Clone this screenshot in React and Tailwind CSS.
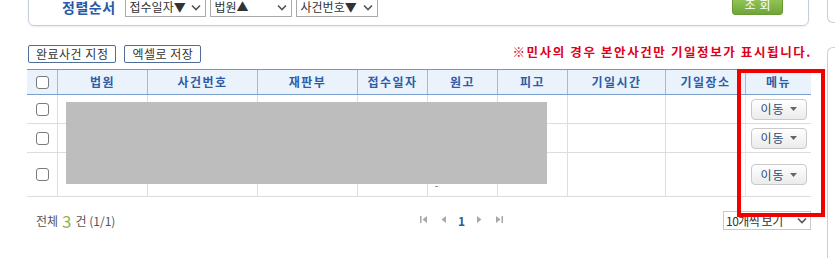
import React from 'react';

const columns = [
  { label: '법원', w: 'w-[90px]' },
  { label: '사건번호', w: 'w-[110px]' },
  { label: '재판부', w: 'w-[100px]' },
  { label: '접수일자', w: 'w-[70px]' },
  { label: '원고', w: 'w-[70px]' },
  { label: '피고', w: 'w-[70px]' },
  { label: '기일시간', w: 'w-[98px]' },
  { label: '기일장소', w: 'w-[80px]' },
];

const rows = [{ h: 'h-[29px]' }, { h: 'h-[29px]' }, { h: 'h-[44px]' }];

const CheckBox = () => (
  <span className="block w-[13px] h-[13px] border border-[#7a7a7a] rounded-[3px] bg-white" />
);

const Chevron = () => (
  <svg width="10" height="7" viewBox="0 0 10 7" className="shrink-0">
    <path d="M1 1.5 L5 5.5 L9 1.5" fill="none" stroke="#555" strokeWidth="1.6" />
  </svg>
);

const SortSelect = ({ text, w }) => (
  <div className={`${w} h-[20px] border border-[#a9a9a9] bg-white flex items-center justify-between pl-[4px] pr-[4px] text-[12px] text-[#333]`}>
    <span className="whitespace-pre">{text}</span>
    <Chevron />
  </div>
);

const MoveButton = () => (
  <div className="w-[56px] h-[21px] rounded-[4px] border border-[#c9c9c9] bg-gradient-to-b from-white to-[#ebebeb] flex items-center justify-center gap-[5px] text-[12px] text-[#2d4a75] tracking-[1px]">
    <span>이동</span>
    <svg width="7" height="4" viewBox="0 0 7 4">
      <path d="M0 0 H7 L3.5 4 Z" fill="#666" />
    </svg>
  </div>
);

const PageIcon = ({ d }) => (
  <svg width="8" height="9" viewBox="0 0 8 9">
    <path d={d} fill="#a8a8a8" />
  </svg>
);

export default function App() {
  return (
    <div
      className="w-[835px] h-[258px] bg-white relative overflow-hidden flex"
      style={{ fontFamily: '"Noto Sans CJK KR", "Noto Sans", sans-serif' }}
    >
      {/* main content */}
      <div className="w-[827px] shrink-0 pl-[27px]">
        {/* search panel (cut at top) */}
        <div className="ml-[1px] w-[781px] mt-[-20px] h-[46px] border border-[#c3cfdc] rounded-b-[6px] shadow-[0_1px_2px_rgba(0,0,0,0.08)] pt-[16px] pl-[33px] pr-[25px]">
          <div className="h-[20px] flex items-center">
            <span className="text-[14px] font-bold text-[#2a58a8] mr-[9px] leading-none tracking-[0.5px]">정렬순서</span>
            <SortSelect text="접수일자▼" w="w-[81px]" />
            <div className="w-[4px]" />
            <SortSelect text="법원▲" w="w-[82px]" />
            <div className="w-[4px]" />
            <SortSelect text="사건번호▼" w="w-[82px]" />
            <div className="ml-auto self-start mt-[-2px] w-[51px] h-[20px] rounded-[3px] border border-[#6a9a34] bg-gradient-to-b from-[#9ccc5c] to-[#6ea53a] text-white text-[12px] flex items-center justify-center tracking-[4px] pl-[4px]">
              조회
            </div>
          </div>
        </div>

        {/* buttons + notice */}
        <div className="mt-[19px] ml-[1px] w-[783px] h-[18px] flex items-center">
          <div className="h-[18px] px-[7px] border border-[#4d6f97] rounded-[2px] text-[12px] text-[#333] flex items-center tracking-[0.5px]">
            완료사건 지정
          </div>
          <div className="ml-[8px] h-[18px] px-[7px] border border-[#4d6f97] rounded-[2px] text-[12px] text-[#333] flex items-center tracking-[0.5px]">
            엑셀로 저장
          </div>
          <div className="ml-auto mt-[-4px] text-[12.5px] font-bold text-[#e0001a] tracking-[1.6px] mr-[-1px]">
            ※민사의 경우 본안사건만 기일정보가 표시됩니다.
          </div>
        </div>

        {/* table */}
        <div className="mt-[6px] w-[784px]">
          <div className="h-[26px] flex border-t border-t-[#6f96c8] border-b border-b-[#7a9fcf] bg-[#eaf2fc]">
            <div className="w-[30px] flex items-center justify-center">
              <CheckBox />
            </div>
            {columns.map((c) => (
              <div
                key={c.label}
                className={`${c.w} border-l border-[#9fbadf] flex items-center justify-center text-[12px] font-bold text-[#2d5ca6] tracking-[1.5px]`}
              >
                {c.label}
              </div>
            ))}
            <div className="w-[66px] border-l border-[#9fbadf] flex items-center justify-center text-[12px] font-bold text-[#2d5ca6] tracking-[1.5px]">
              메뉴
            </div>
          </div>
          {rows.map((r, i) => (
            <div key={i} className={`${r.h} flex border-b border-[#dcdcdc]`}>
              <div className="w-[30px] flex items-center justify-center">
                <CheckBox />
              </div>
              {columns.map((c, j) => (
                <div key={c.label} className={`${c.w} border-l border-[#dedede] flex items-end justify-center`}>
                  {i === 2 && j === 4 && <span className="text-[10px] text-[#555] leading-none mb-[6px] mr-[52px]">-</span>}
                </div>
              ))}
              <div className="w-[66px] border-l border-[#e8e8e8] flex items-center justify-center">
                <MoveButton />
              </div>
            </div>
          ))}
        </div>

        {/* footer */}
        <div className="mt-[14px] w-[784px] h-[19px] flex items-center">
          <div className="w-[393px] pl-[9px] text-[12px] text-[#555] flex items-center">
            <span>전체</span>
            <span className="text-[17px] text-[#8db352] mx-[4px] leading-none">3</span>
            <span>건 (1/1)</span>
          </div>
          <div className="flex items-center gap-[12px] mt-[-2px]">
            <PageIcon d="M0 1 H1.5 V8 H0 Z M7 1 V8 L2.5 4.5 Z" />
            <PageIcon d="M6 1 V8 L1.5 4.5 Z" />
            <span className="text-[12px] font-bold text-[#2c5aa0] mt-[3px] mx-[-2px]">1</span>
            <PageIcon d="M2 1 V8 L6.5 4.5 Z" />
            <PageIcon d="M1 1 V8 L5.5 4.5 Z M6.5 1 H8 V8 H6.5 Z" />
          </div>
          <div className="ml-auto w-[88px] h-[19px] border border-[#c8c8c8] bg-white flex items-center justify-between pl-[2px] pr-[3px] text-[12px] text-[#333]">
            <span className="tracking-[-0.5px]">10개씩 보기</span>
            <Chevron />
          </div>
        </div>
      </div>

      {/* right neighbouring panels */}
      <div className="flex-1 flex flex-col">
        <div className="mt-[-10px] h-[33px] border-l border-b border-[#c8d0da] rounded-bl-[6px]" />
        <div className="mt-[24px] flex-1 border-l border-t border-[#c8d0da] rounded-tl-[6px]" />
      </div>

      {/* redaction overlay */}
      <div className="absolute left-[66px] top-[102px] w-[481px] h-[82px] bg-[#bdbdbd]" />

      {/* highlight annotation */}
      <div className="absolute left-[737px] top-[69px] w-[88px] h-[148px] border-4 border-[#f00000]" />
    </div>
  );
}
